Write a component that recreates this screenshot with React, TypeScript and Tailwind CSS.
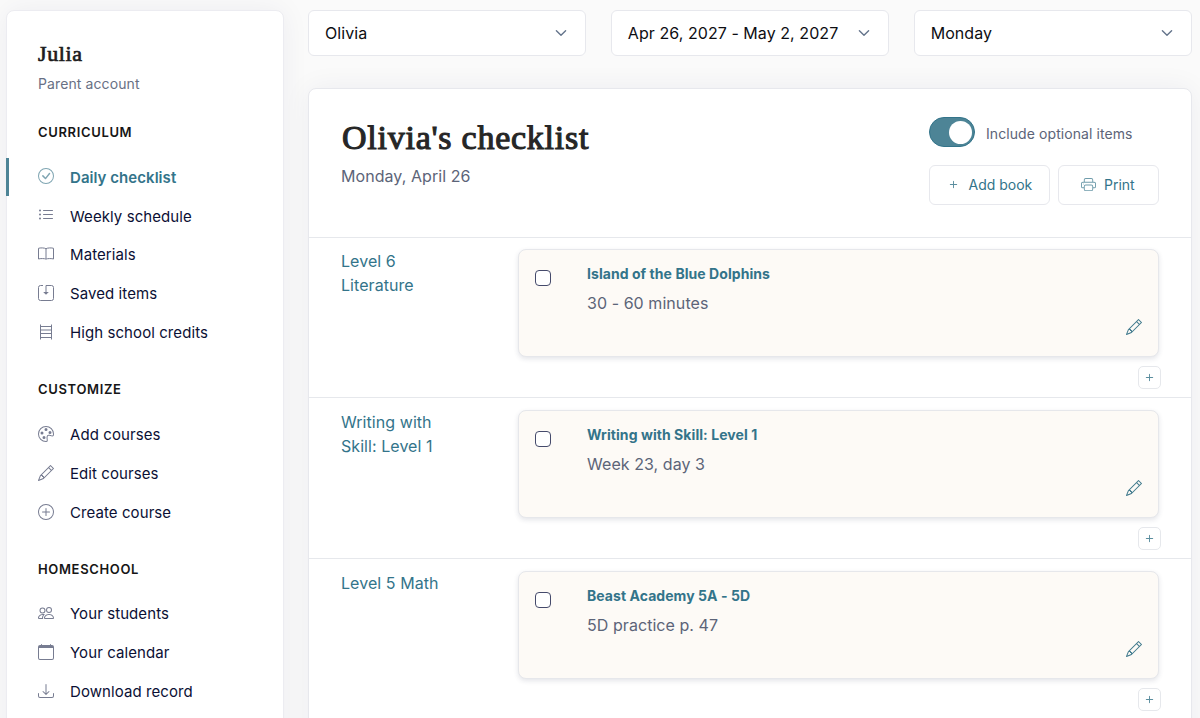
import React from "react";
import {
  BsCheckCircle,
  BsListUl,
  BsPalette,
  BsPencil,
  BsPlusCircle,
  BsPeople,
  BsCalendar,
  BsDownload,
  BsPrinter,
  BsPlus,
} from "react-icons/bs";

type IconProps = { className?: string };

function BookIcon({ className }: IconProps) {
  return (
    <svg viewBox="0 0 16 16" className={className} fill="none" stroke="currentColor">
      <path d="M8 2.600v10.200M8 2.800C6.800 1.700 2 1.700.5 2.300v10.700c1.500-.6 6.300-.6 7.500.1 1.200-.7 6-.7 7.500-.1V2.300C14 1.700 9.200 1.700 8 2.800Z" />
    </svg>
  );
}

function SavedIcon({ className }: IconProps) {
  return (
    <svg viewBox="0 0 16 16" className={className} fill="none" stroke="currentColor">
      <path d="M5 .5H2.500A2 2 0 0 0 .5 2.500v11a2 2 0 0 0 2 2h11a2 2 0 0 0 2-2v-11a2 2 0 0 0-2-2H8V8" />
      <path d="M5.200 7h5.600L8 9.800Z" fill="currentColor" stroke="none" />
    </svg>
  );
}

function LadderIcon({ className }: IconProps) {
  return (
    <svg viewBox="0 0 16 16" className={className} fill="none" stroke="currentColor">
      <path d="M2.500.5v15M13.500.5v15M2.500 2.500h11M2.500 6h11M2.500 9.500h11M2.500 13.500h11" />
    </svg>
  );
}

function Chevron() {
  return (
    <svg viewBox="0 0 12 8" className="h-2 w-3" fill="none" stroke="#64748b" strokeWidth="1.4" strokeLinecap="round" strokeLinejoin="round">
      <path d="M1.400 1.700 6 6.200l4.600-4.500" />
    </svg>
  );
}

type Item = { label: string; icon: React.ComponentType<IconProps>; active?: boolean };

const groups: { title: string; items: Item[] }[] = [
  {
    title: "CURRICULUM",
    items: [
      { label: "Daily checklist", icon: BsCheckCircle, active: true },
      { label: "Weekly schedule", icon: BsListUl },
      { label: "Materials", icon: BookIcon },
      { label: "Saved items", icon: SavedIcon },
      { label: "High school credits", icon: LadderIcon },
    ],
  },
  {
    title: "CUSTOMIZE",
    items: [
      { label: "Add courses", icon: BsPalette },
      { label: "Edit courses", icon: BsPencil },
      { label: "Create course", icon: BsPlusCircle },
    ],
  },
  {
    title: "HOMESCHOOL",
    items: [
      { label: "Your students", icon: BsPeople },
      { label: "Your calendar", icon: BsCalendar },
      { label: "Download record", icon: BsDownload },
    ],
  },
];

const rows = [
  { course: "Level 6 Literature", title: "Island of the Blue Dolphins", note: "30 - 60 minutes" },
  { course: "Writing with Skill: Level 1", title: "Writing with Skill: Level 1", note: "Week 23, day 3" },
  { course: "Level 5 Math", title: "Beast Academy 5A - 5D", note: "5D practice p. 47" },
];

function NavItem({ item }: { item: Item }) {
  const Icon = item.icon;
  return (
    <a
      className={
        item.active
          ? "flex h-[38.950px] items-center border-l-[3px] border-[#4d8496] pl-[29px] text-[15px] font-semibold tracking-[0.050px] text-[#33748a]"
          : "flex h-[38.950px] items-center border-l-[3px] border-transparent pl-[29px] text-[15px] tracking-[0.080px] text-[#0b1035]"
      }
    >
      <Icon className={item.active ? "mr-4 mb-px size-4 text-[#7fa5b2]" : "mr-4 mb-px size-4 text-[#777c91]"} />
      <span className="pt-[1.800px]">{item.label}</span>
    </a>
  );
}

function Sidebar() {
  return (
    <aside className="h-[760px] w-[277.500px] shrink-0 rounded-lg border border-[#ececf1] bg-white shadow-[0_0_28px_rgba(30,30,80,0.06)]">
      <div className="pt-[29px] pl-[31px]">
        <h2 className="font-['Liberation_Serif',serif] text-[22px] leading-7 tracking-[0.6px] text-[#1c1c1c] [-webkit-text-stroke:0.7px_#1c1c1c]">Julia</h2>
        <p className="mt-[6px] text-sm leading-5 tracking-[0.100px] text-[#687084]">Parent account</p>
      </div>
      {groups.map((g, i) => (
        <nav key={g.title} className={i === 0 ? "-ml-px pt-[28px]" : "-ml-px pt-[27.200px]"}>
          <h3 className="mb-[15.500px] pl-8 text-[13px] leading-5 font-semibold tracking-[0.650px] text-[#161616]">{g.title}</h3>
          {g.items.map((it) => (
            <NavItem key={it.label} item={it} />
          ))}
        </nav>
      ))}
    </aside>
  );
}

function Select({ label }: { label: string }) {
  return (
    <div className="flex h-[46px] items-center justify-between rounded-md border border-[#e7e8ed] bg-white pr-[18px] pl-4 text-base tracking-[0.060px] whitespace-nowrap text-[#0d0d12]">
      <span>{label}</span>
      <Chevron />
    </div>
  );
}

function ChecklistRow({ row, first }: { row: (typeof rows)[number]; first: boolean }) {
  return (
    <section
      className={
        first
          ? "flex h-[160px] border-t border-[#e6e8ec] pr-[32.500px] pl-8"
          : "flex h-[161px] border-t border-[#e6e8ec] pt-px pr-[32.500px] pl-8"
      }
    >
      <div className="w-[177px] shrink-0 pt-[10.500px] pr-16 text-base leading-6 tracking-[0.060px] text-[#33748a]">{row.course}</div>
      <div className="flex flex-1 flex-col">
        <div className="mt-[11px] flex h-[108px] shrink-0 rounded-lg border border-[#e6e7eb] bg-[#fdfaf6] pl-4 shadow-[0_2px_5px_rgba(30,40,70,0.12)]">
          <span className="mt-5 size-4 shrink-0 rounded-[4px] border border-[#454a6b] bg-white" />
          <div className="flex-1 pt-[14px] pl-9">
            <h4 className="text-sm leading-5 font-bold tracking-[0.060px] text-[#33748a]">{row.title}</h4>
            <p className="mt-[7px] text-base leading-6 tracking-[0.060px] text-[#5c6478]">{row.note}</p>
          </div>
          <BsPencil className="mt-[69px] mr-4 size-4 text-[#417a8d]" />
        </div>
        <button className="mt-[9px] -mr-[2.500px] flex size-[23px] shrink-0 items-center justify-center self-end rounded-[5px] border border-[#e6e8ec] bg-white text-[#5a8d9e]">
          <BsPlus className="size-[15px]" />
        </button>
      </div>
    </section>
  );
}

export default function App() {
  return (
    <div className="flex h-[718px] w-[1200px] overflow-hidden bg-[#fafafa] pt-[10px] pl-[6px] font-['Inter',sans-serif]">
      <Sidebar />
      <main className="ml-[24.500px] w-[884px] shrink-0">
        <div className="grid grid-cols-3 gap-[24.500px]">
          <Select label="Olivia" />
          <Select label="Apr 26, 2027 - May 2, 2027" />
          <Select label="Monday" />
        </div>
        <div className="mt-8 h-[760px] rounded-lg border border-[#e7e8ed] bg-white shadow-[0_0_28px_rgba(30,30,80,0.06)]">
          <header className="flex h-[148px] justify-between pr-8 pl-8">
            <div className="pt-[27px]">
              <h1 className="pb-px pl-px font-['Liberation_Serif',serif] text-[34px] leading-[43px] tracking-[0.750px] text-[#262626] [-webkit-text-stroke:1.1px_#262626]">Olivia's checklist</h1>
              <p className="mt-[4px] text-base leading-6 tracking-[0.060px] text-[#5c6478]">Monday, April 26</p>
            </div>
            <div className="pt-[28px]">
              <div className="flex items-start">
                <div className="flex h-[30px] w-[46px] items-center justify-end rounded-full border border-[#33748a] bg-[#4d8496] pr-[2px]">
                  <span className="size-[23px] rounded-full bg-white" />
                </div>
                <span className="mt-[7px] ml-[11px] text-sm leading-5 tracking-[0.080px] text-[#5c6478]">Include optional items</span>
              </div>
              <div className="mt-[18px] flex gap-2 text-sm text-[#33748a]">
                <button className="flex h-[39.500px] w-[121px] items-center rounded-md border border-[#e7e8ed] pl-[15.500px]">
                  <BsPlus className="mr-2 size-[15px] text-[#5a8d9e]" />
                  Add book
                </button>
                <button className="flex h-[39.500px] w-[101px] items-center rounded-md border border-[#e7e8ed] pl-[22px]">
                  <BsPrinter className="mr-2 size-[15px] text-[#6f9cab]" />
                  Print
                </button>
              </div>
            </div>
          </header>
          {rows.map((r, i) => (
            <ChecklistRow key={r.title} row={r} first={i === 0} />
          ))}
        </div>
      </main>
    </div>
  );
}
